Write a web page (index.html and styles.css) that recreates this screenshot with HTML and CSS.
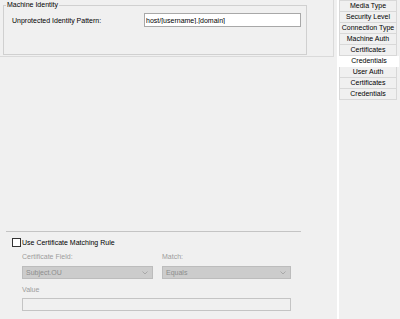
FILE: index.html
```html
<!DOCTYPE html>
<html>
 <head>
  <meta charset="utf-8">
  <title>Credentials</title>
  <link rel="stylesheet" href="styles.css">
 </head>
 <body>
  <div class="window">
   <div class="main">
    <div class="identity-panel">
     <fieldset class="group">
      <legend>Machine Identity</legend>
      <div class="row">
       <label class="row-label">Unprotected Identity Pattern:</label>
       <input class="text" type="text" value="host/[username].[domain]">
      </div>
     </fieldset>
    </div>

    <div class="spacer"></div>

    <div class="cert-rule">
     <div class="sep"></div>
     <label class="check"><span class="box"></span>Use Certificate Matching Rule</label>
     <div class="fields">
      <div class="field">
       <span class="cap">Certificate Field:</span>
       <div class="combo combo-field">Subject.OU
        <svg class="chev" width="6" height="4" viewBox="0 0 6 4"><polyline points="0.5,0.5 3,3 5.5,0.5" fill="none" stroke="#a8a8a8" stroke-width="1"/></svg>
       </div>
      </div>
      <div class="field">
       <span class="cap">Match:</span>
       <div class="combo combo-match">Equals
        <svg class="chev" width="6" height="4" viewBox="0 0 6 4"><polyline points="0.5,0.5 3,3 5.5,0.5" fill="none" stroke="#a8a8a8" stroke-width="1"/></svg>
       </div>
      </div>
     </div>
     <div class="field value-field">
      <span class="cap">Value</span>
      <div class="textbox"></div>
     </div>
    </div>
   </div>

   <div class="divider"></div>

   <div class="tabs">
    <div class="tab">Media Type</div>
    <div class="tab">Security Level</div>
    <div class="tab">Connection Type</div>
    <div class="tab">Machine Auth</div>
    <div class="tab">Certificates</div>
    <div class="tab selected">Credentials</div>
    <div class="tab">User Auth</div>
    <div class="tab">Certificates</div>
    <div class="tab">Credentials</div>
   </div>
  </div>
 </body>
</html>
```

FILE: styles.css
```css
body {
  margin:0;
  font-family:"Liberation Sans", Arial, sans-serif;
  font-size:7px;
  color:#000;
  background-color:#f0f0f0;
}

.window {
  display:flex;
  width:400px;
  height:319px;
}

.main {
  width:337px;
  display:flex;
  flex-direction:column;
  background-color:#f0f0f0;
}

/* top panel */
.identity-panel {
  width:334px;
  height:57px;
  box-sizing:border-box;
  border-right:1px solid #dadada;
  border-bottom:1px solid #dadada;
}

.group {
  margin:1px 0 0 3px;
  padding:0;
  width:304px;
  height:54px;
  box-sizing:border-box;
  border:1px solid #d0d0d0;
}

.group legend {
  margin-left:2px;
  padding:0 1px;
  line-height:8px;
}

.row {
  display:flex;
  align-items:center;
  margin-top:4px;
  padding-left:8px;
}

.row-label {
  width:132px;
}

.text {
  width:157px;
  height:14px;
  box-sizing:border-box;
  margin:0;
  padding:0 1px;
  border:1px solid #a8a8a8;
  background-color:#fff;
  font-family:inherit;
  font-size:7px;
  color:#000;
  outline:none;
}

.spacer {
  flex:1;
}

/* certificate matching rule */
.cert-rule {
  padding-bottom:8px;
}

.sep {
  margin:0 36px 0 6px;
  border-top:1px solid #c4c4c4;
}

.check {
  display:flex;
  align-items:center;
  gap:1px;
  height:9px;
  margin:6px 0 0 12px;
}

.box {
  width:9px;
  height:9px;
  box-sizing:border-box;
  border:1px solid #333;
  background-color:#fff;
}

.fields {
  display:flex;
  gap:9px;
  margin:6px 0 0 22px;
}

.field {
  display:flex;
  flex-direction:column;
}

.cap {
  line-height:8px;
  color:#9c9c9c;
}

.combo {
  position:relative;
  height:13px;
  box-sizing:border-box;
  margin-top:5px;
  padding-left:3px;
  border:1px solid #bcbcbc;
  background-color:#cccccc;
  color:#8c8c8c;
  line-height:11px;
}

.combo-field {
  width:131px;
}

.combo-match {
  width:129px;
}

.chev {
  position:absolute;
  right:4px;
  top:4px;
}

.value-field {
  margin:7px 0 0 22px;
}

.textbox {
  width:269px;
  height:13px;
  box-sizing:border-box;
  margin-top:4px;
  border:1px solid #c4c4c4;
  background-color:#f0f0f0;
}

/* side tabs */
.divider {
  width:2px;
  background-color:#fff;
}

.tabs {
  flex:1;
  background-color:#f0f0f0;
}

.tab {
  width:58px;
  height:11px;
  box-sizing:border-box;
  border:1px solid #d8d8d8;
  border-top:none;
  text-align:center;
  line-height:10px;
  color:#000;
}

.tab:first-child {
  border-top:1px solid #d8d8d8;
  height:12px;
}

.tab.selected {
  width:60px;
  border:none;
  background-color:#fff;
  height:11px;
}
```
